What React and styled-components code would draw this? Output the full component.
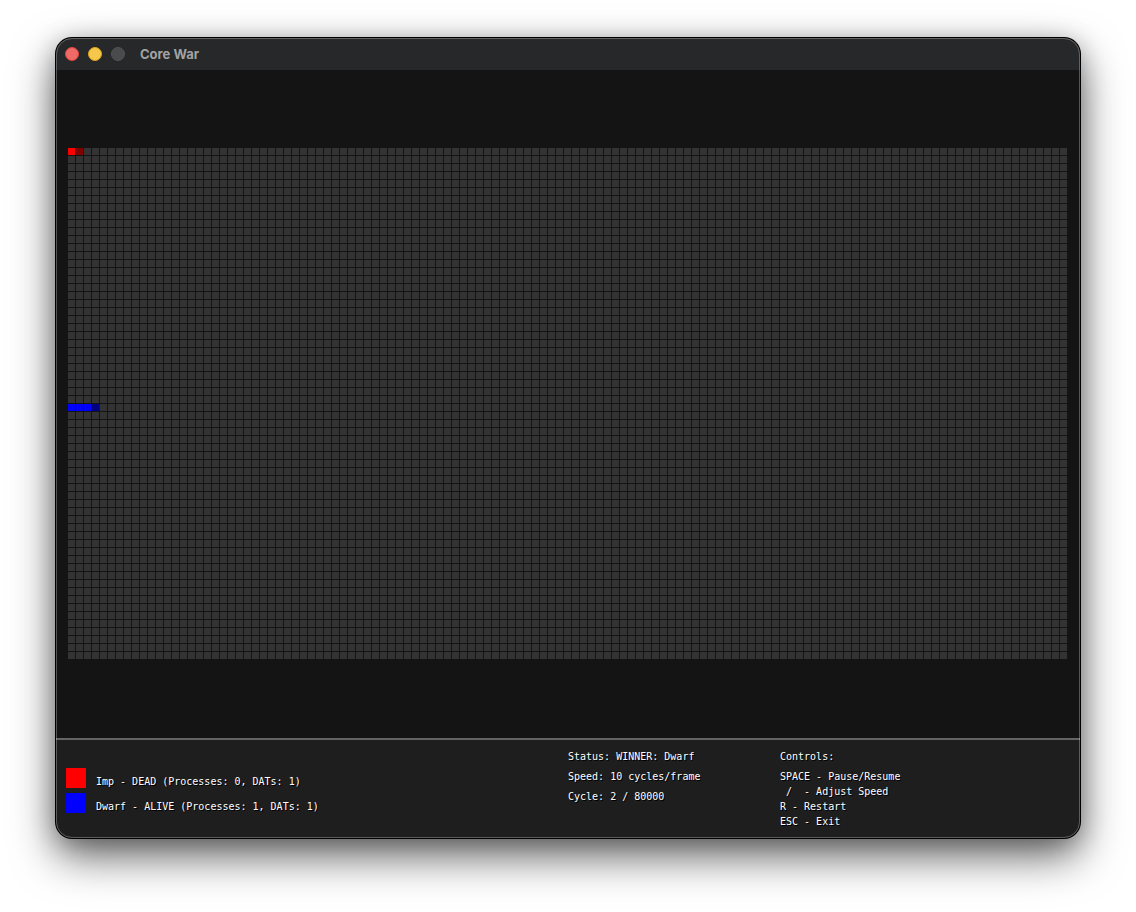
import React from 'react'
import styled, { createGlobalStyle } from 'styled-components'

const COLS = 125

const cells = [
  { address: 0, color: '#ff0000' },
  { address: 1, color: '#800000' },
  { address: 4000, color: '#0000ff' },
  { address: 4001, color: '#0000ff' },
  { address: 4002, color: '#0000ff' },
  { address: 4003, color: '#000080' },
]

const warriors = [
  { name: 'Imp', state: 'DEAD', processes: 0, dats: 1, color: '#ff0000' },
  { name: 'Dwarf', state: 'ALIVE', processes: 1, dats: 1, color: '#0000ff' },
]

const App = () => {
  return (
    <Desktop>
      <GlobalStyle />
      <Window>
        <TitleBar>
          <Light type="button" aria-label="Close" $fill="#ee6a67" $edge="#e0433f" />
          <Light type="button" aria-label="Minimize" $fill="#f5c84b" $edge="#dfa41c" />
          <Light type="button" aria-label="Zoom" disabled $fill="#4a4b4c" $edge="#525354" />
          <Title>Core War</Title>
        </TitleBar>
        <Arena>
          <Memory>
            {cells.map(({ address, color }) => (
              <Cell
                key={address}
                $col={(address % COLS) + 1}
                $row={Math.floor(address / COLS) + 1}
                $color={color}
              />
            ))}
          </Memory>
        </Arena>
        <Panel>
          <Warriors>
            {warriors.map((w) => (
              <Warrior key={w.name}>
                <Swatch $color={w.color} />
                <WarriorText>
                  {`${w.name} - ${w.state} (Processes: ${w.processes}, DATs: ${w.dats})`}
                </WarriorText>
              </Warrior>
            ))}
          </Warriors>
          <Status>
            <Line $height={20}>Status: WINNER: Dwarf</Line>
            <Line $height={20}>Speed: 10 cycles/frame</Line>
            <Line $height={20}>Cycle: 2 / 80000</Line>
          </Status>
          <Controls>
            <Line $height={20}>Controls:</Line>
            <Keys>
              <Line $height={15}>SPACE - Pause/Resume</Line>
              <Line $height={15}>{' /  - Adjust Speed'}</Line>
              <Line $height={15}>R - Restart</Line>
              <Line $height={15}>ESC - Exit</Line>
            </Keys>
          </Controls>
        </Panel>
      </Window>
    </Desktop>
  )
}

export default App

const GlobalStyle = createGlobalStyle`
* {
  box-sizing: border-box;
}

body {
  margin: 0;
  background: #ffffff;
}
`

const Desktop = styled.div`
  padding: 38px 56px 74px;
  overflow: hidden;
`

const Window = styled.main`
  position: relative;
  border-radius: 16px;
  background: #141414;
  box-shadow: 0 0 0 1px #000000, 0 18px 44px rgba(0, 0, 0, 0.6),
    0 4px 24px rgba(0, 0, 0, 0.25);

  /* thin highlight that runs inside the window edge */
  &::after {
    content: '';
    position: absolute;
    inset: 0;
    border: 1px solid rgba(255, 255, 255, 0.28);
    border-radius: 16px;
    pointer-events: none;
  }
`

const TitleBar = styled.header`
  display: flex;
  align-items: center;
  gap: 9px;
  height: 32px;
  padding: 0 9px;
  border-radius: 16px 16px 0 0;
  background: #262829;
`

const Light = styled.button`
  width: 14px;
  height: 14px;
  padding: 0;
  border: 1px solid ${(props) => props.$edge};
  border-radius: 50%;
  background: ${(props) => props.$fill};
`

const Title = styled.h1`
  margin: 0 0 0 6px;
  color: #a2a3a4;
  font-family: Inter, sans-serif;
  font-size: 13px;
  font-weight: 700;
  line-height: 16px;
`

const Arena = styled.section`
  padding: 78px 12px;
`

const Memory = styled.div`
  display: grid;
  grid-template-columns: repeat(${COLS}, 8px);
  grid-template-rows: repeat(64, 8px);
  background-color: #333333;
  background-image: linear-gradient(to right, transparent 7px, #141414 7px),
    linear-gradient(to bottom, transparent 7px, #141414 7px);
  background-size: 8px 8px;
`

const Cell = styled.div`
  grid-column: ${(props) => props.$col};
  grid-row: ${(props) => props.$row};
  width: 7px;
  height: 7px;
  background: ${(props) => props.$color};
`

const Panel = styled.footer`
  display: grid;
  grid-template-columns: 502fr 212fr 290fr;
  min-height: 100px;
  padding: 7px 10px 9px;
  border-top: 2px solid #646464;
  border-radius: 0 0 16px 16px;
  background: #1e1e1e;
  color: #ffffff;
  font-family: 'DejaVu Sans Mono', monospace;
  font-size: 10px;
  text-shadow: 1px 1px 0 #000000;
`

const Warriors = styled.ul`
  display: flex;
  flex-direction: column;
  gap: 5px;
  margin: 0;
  padding: 21px 0 0;
  list-style: none;
`

const Warrior = styled.li`
  display: flex;
  gap: 10px;
  height: 20px;
`

const Swatch = styled.span`
  width: 20px;
  height: 20px;
  background: ${(props) => props.$color};
`

const WarriorText = styled.span`
  padding-top: 4px;
  line-height: 20px;
`

const Status = styled.div``

const Controls = styled.div``

const Keys = styled.div`
  padding-top: 2px;
`

const Line = styled.p`
  margin: 0;
  line-height: ${(props) => props.$height}px;
  white-space: pre;
`
